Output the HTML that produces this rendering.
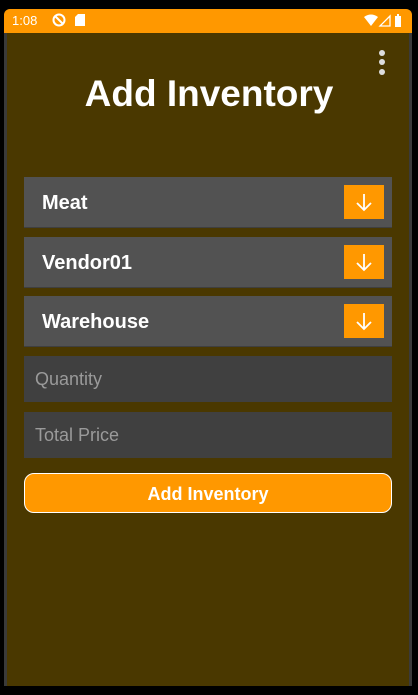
<!DOCTYPE html>
<html><head><style>
body{margin:0;width:418px;height:695px;background:#000;position:relative;overflow:hidden;font-family:"Liberation Sans",Roboto,sans-serif}
.dev{position:absolute;left:4px;top:9px;width:408px;height:677px;background:#3a3a3a;border-radius:6px 6px 0 0;overflow:hidden}
.sb{position:absolute;left:0;top:0;width:408px;height:24px;background:#ff9800;color:#fff;font-size:13px}
.sp{position:absolute;left:24px;width:368px;height:50px;background:#525252;border-bottom:1px solid #3f3f3f}
.sp span{position:absolute;left:18px;top:15px;color:#fff;font-weight:bold;font-size:20px}
.ar{position:absolute;left:320px;top:8px;width:40px;height:34px;background:#ff9800}
.in{position:absolute;left:24px;width:368px;height:46px;background:#404040;color:#9a9a9a;font-size:18px}
.in span{position:absolute;left:11px;top:13px}
</style></head><body>
<div class="dev">
<div class="sb"><span style="position:absolute;left:8px;top:4px">1:08</span>
<svg style="position:absolute;left:48px;top:4px" width="14" height="14" viewBox="0 0 14 14"><circle cx="7" cy="7" r="5.5" fill="none" stroke="#fff" stroke-width="2"/><path d="M3 3L11 11" stroke="#fff" stroke-width="2"/></svg>
<svg style="position:absolute;left:71px;top:5px" width="10" height="12" viewBox="0 0 10 12"><path d="M3 0H10V12H0V3Z" fill="#fff"/></svg>
<svg style="position:absolute;left:360px;top:5px" width="40" height="14" viewBox="0 0 40 14"><path d="M0 3Q7 -2 14 3L7 12Z" fill="#fff"/><path d="M16 12L26 2V12Z" fill="none" stroke="#fff" stroke-width="1.3"/><rect x="31" y="2" width="6" height="11" fill="#fff"/><rect x="33" y="0" width="2" height="2" fill="#fff"/></svg>
</div>
</div>
<div style="position:absolute;left:7px;top:33px;width:402px;height:653px;background:#4a3800">
</div>
<svg style="position:absolute;left:377px;top:48px" width="10" height="30"><circle cx="5" cy="5" r="3" fill="#ddd"/><circle cx="5" cy="14" r="3" fill="#ddd"/><circle cx="5" cy="24" r="3" fill="#ddd"/></svg>
<div style="position:absolute;left:0;width:418px;top:73px;text-align:center;color:#fff;font-weight:bold;font-size:37px">Add Inventory</div>
<div class="sp" style="top:177px"><span>Meat</span><div class="ar"><svg width="40" height="34"><path d="M20 9V25M13 18L20 25L27 18" fill="none" stroke="#fff" stroke-width="1.8"/></svg></div></div>
<div class="sp" style="top:237px"><span>Vendor01</span><div class="ar"><svg width="40" height="34"><path d="M20 9V25M13 18L20 25L27 18" fill="none" stroke="#fff" stroke-width="1.8"/></svg></div></div>
<div class="sp" style="top:296px"><span>Warehouse</span><div class="ar"><svg width="40" height="34"><path d="M20 9V25M13 18L20 25L27 18" fill="none" stroke="#fff" stroke-width="1.8"/></svg></div></div>
<div class="in" style="top:356px"><span>Quantity</span></div>
<div class="in" style="top:412px"><span>Total Price</span></div>
<div style="position:absolute;left:24px;top:473px;width:366px;height:38px;background:#ff9800;border:1px solid #fff;border-radius:10px;color:#fff;font-weight:bold;font-size:18px;text-align:center;line-height:40px">Add Inventory</div>
</body></html>
